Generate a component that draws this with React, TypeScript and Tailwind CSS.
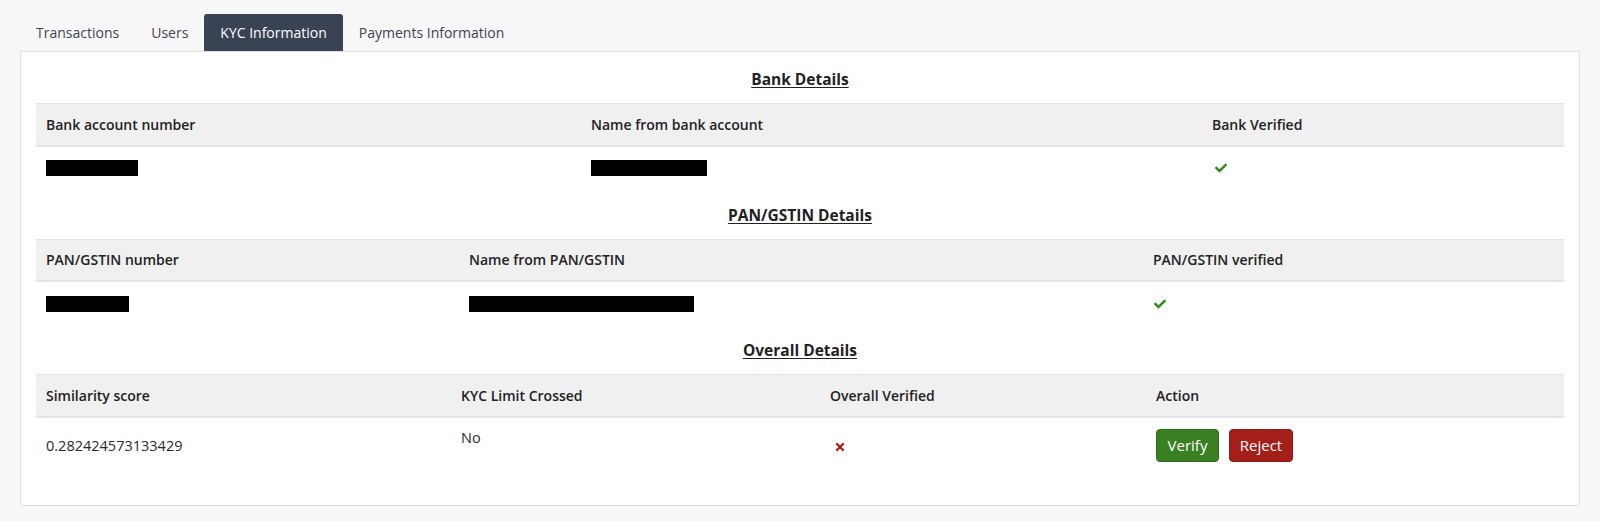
import React from "react";
import { FaCheck, FaTimes } from "react-icons/fa";

const tabs = ["Transactions", "Users", "KYC Information", "Payments Information"];

const Redacted = ({ w }: { w: number }) => (
    <span className="inline-block h-[16px] bg-black align-middle" style={{ width: w }} />
);

const Check = () => <FaCheck className="inline-block text-[#2f8a1e] text-[12px]" />;

const SectionTitle = ({ children }: { children: React.ReactNode }) => (
    <div className="pt-[17px] pb-[13px] text-center text-[15.5px] leading-[21px] font-bold text-[#222] underline underline-offset-2">
        {children}
    </div>
);

const Th = ({ children, w }: { children: React.ReactNode; w: string }) => (
    <th
        className={
            "h-[42px] px-[10px] text-left align-middle text-[14px] font-semibold text-[#222] border-t border-[#e3e3e3] border-b-2 border-b-[#e1e4e8] " +
            w
        }
    >
        {children}
    </th>
);

const Td = ({ children, top }: { children?: React.ReactNode; top?: boolean }) => (
    <td
        className={
            "px-[10px] text-[14.5px] text-[#2b2b2b] " +
            (top ? "align-top pt-[9px]" : "align-middle")
        }
    >
        {children}
    </td>
);

const App = () => {
    return (
        <div className="min-h-screen bg-[#f7f7f7] px-[20px] pt-[14px] font-['Open_Sans','Noto_Sans',sans-serif]">
            <div className="flex">
                {tabs.map((t, i) => (
                    <div
                        key={t}
                        className={
                            "h-[37px] px-4 flex items-center text-[14px] rounded-t-[3px] " +
                            (i === 2 ? "bg-[#384353] text-white" : "text-[#3d4452]")
                        }
                    >
                        {t}
                    </div>
                ))}
            </div>

            <div className="bg-white border border-[#dedede] rounded-b-[4px] px-[15px] pb-[31px]">
                <SectionTitle>Bank Details</SectionTitle>
                <table className="w-full table-fixed border-collapse">
                    <thead>
                        <tr className="bg-[#f0f0f0]">
                            <Th w="w-[545px]">Bank account number</Th>
                            <Th w="w-[621px]">Name from bank account</Th>
                            <Th w="w-[362px]">Bank Verified</Th>
                        </tr>
                    </thead>
                    <tbody>
                        <tr className="h-[42px]">
                            <Td>
                                <Redacted w={92} />
                            </Td>
                            <Td>
                                <Redacted w={116} />
                            </Td>
                            <Td>
                                <span className="pl-[3px]">
                                    <Check />
                                </span>
                            </Td>
                        </tr>
                    </tbody>
                </table>

                <SectionTitle>PAN/GSTIN Details</SectionTitle>
                <table className="w-full table-fixed border-collapse">
                    <thead>
                        <tr className="bg-[#f0f0f0]">
                            <Th w="w-[423px]">PAN/GSTIN number</Th>
                            <Th w="w-[684px]">Name from PAN/GSTIN</Th>
                            <Th w="w-[421px]">PAN/GSTIN verified</Th>
                        </tr>
                    </thead>
                    <tbody>
                        <tr className="h-[42px]">
                            <Td>
                                <Redacted w={83} />
                            </Td>
                            <Td>
                                <Redacted w={225} />
                            </Td>
                            <Td>
                                <span className="pl-[1px]">
                                    <Check />
                                </span>
                            </Td>
                        </tr>
                    </tbody>
                </table>

                <SectionTitle>Overall Details</SectionTitle>
                <table className="w-full table-fixed border-collapse">
                    <thead>
                        <tr className="bg-[#f0f0f0]">
                            <Th w="w-[415px]">Similarity score</Th>
                            <Th w="w-[369px]">KYC Limit Crossed</Th>
                            <Th w="w-[326px]">Overall Verified</Th>
                            <Th w="w-[418px]">Action</Th>
                        </tr>
                    </thead>
                    <tbody>
                        <tr className="h-[57px]">
                            <Td>0.282424573133429</Td>
                            <Td top>No</Td>
                            <Td>
                                <FaTimes className="inline-block text-[#b31b1b] text-[12px] ml-[4px]" />
                            </Td>
                            <Td>
                                <div className="flex gap-[10px]">
                                    <button className="h-[33px] w-[63px] rounded-[4px] border border-[#2f6d1a] bg-[#3a7f22] text-[15px] text-white">
                                        Verify
                                    </button>
                                    <button className="h-[33px] w-[64px] rounded-[4px] border border-[#8e1a15] bg-[#a41f1a] text-[15px] text-white">
                                        Reject
                                    </button>
                                </div>
                            </Td>
                        </tr>
                    </tbody>
                </table>
            </div>
        </div>
    );
};

export default App;
